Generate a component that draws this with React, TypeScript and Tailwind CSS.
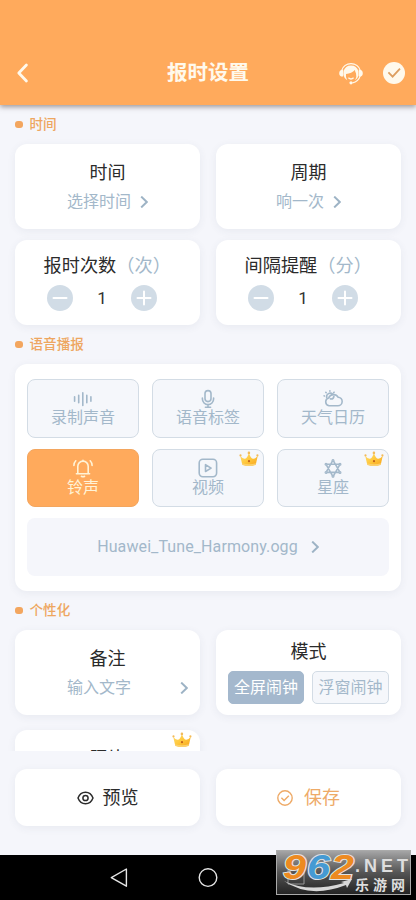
import React, { FC, ReactNode } from "react";
import clsx from "clsx";

interface ICard {
	className?: string;
	children?: ReactNode;
}

interface IStepper {
	title: string;
	unit: string;
	value: number;
}

const Card: FC<ICard> = ({ className, children }) => (
	<div
		className={clsx(
			"relative rounded-[12px] bg-white shadow-[0_2px_8px_rgba(60,70,100,0.07)]",
			className
		)}
	>
		{children}
	</div>
);

const SectionLabel: FC<{ label: string; className?: string }> = ({
	label,
	className,
}) => (
	<div className={clsx("flex items-center gap-[7px]", className)}>
		<span className="mt-px size-[7.5px] rounded-[3px] bg-[#f3a65f]" />
		<h2 className="text-[13.6px] leading-5 font-medium text-[#eea660]">{label}</h2>
	</div>
);

const Chevron: FC<{ className?: string }> = ({ className }) => (
	<svg
		viewBox="0 0 8 12"
		className={clsx("h-3 w-2 shrink-0 fill-none stroke-[#9db3c5] stroke-2", className)}
	>
		<path d="M1.2.6 6.8 6l-5.6 5.4" />
	</svg>
);

const Crown: FC<{ className?: string }> = ({ className }) => (
	<svg viewBox="0 0 20 16" className={clsx("absolute h-[16px] w-[20px]", className)}>
		<defs>
			<linearGradient id="gold" x1="0" x2="1" y1="0" y2="1">
				<stop offset="0" stopColor="#ffde72" />
				<stop offset="0.5" stopColor="#ffc83c" />
				<stop offset="1" stopColor="#f7a21b" />
			</linearGradient>
		</defs>
		<path
			d="M3.2 13.6 1.2 4.8q2.6 3.4 4.8 3Q8.4 7 9.9 2q1.6 5 4 5.8 2.2.4 4.9-3l-2 8.8Q10 16.4 3.2 13.6Z"
			fill="url(#gold)"
		/>
		<path d="M3 12.2q7 2.3 14 0l-.4 1.7q-6.6 2.4-13.2 0Z" fill="#fbd06c" />
		<circle cx="1.5" cy="4.4" r="1.1" fill="#f3bb5a" />
		<circle cx="9.9" cy="1.9" r="1.3" fill="#f3bb5a" />
		<circle cx="18.4" cy="4.4" r="1.1" fill="#f3bb5a" />
		<circle cx="10" cy="10.2" r="1.1" fill="#c2611b" />
	</svg>
);

const iconClass = "h-5 w-5 fill-none stroke-current stroke-[1.6]";

const tiles = [
	{
		label: "录制声音",
		icon: (
			<svg viewBox="0 0 20 20" className={iconClass}>
				<path
					d="M1.6 8.7v4.5M5.7 7.2v7.6M9.8 4.8v12.6M13.8 7.2v7.6M17.9 8.7v4.5"
					strokeLinecap="round"
				/>
			</svg>
		),
	},
	{
		label: "语音标签",
		icon: (
			<svg viewBox="0 0 20 20" className={iconClass} strokeLinecap="round">
				<rect x="7" y="2.6" width="6" height="11" rx="3" />
				<path d="M4.4 10v1a5.6 5.6 0 0 0 11.2 0v-1M10 16.8v2.2M7.4 19.2h5.2" />
			</svg>
		),
	},
	{
		label: "天气日历",
		icon: (
			<svg viewBox="0 0 20 20" className={iconClass} strokeLinecap="round">
				<path d="M6 17.8h8.6a4.3 4.3 0 0 0 .5-8.6 5.2 5.2 0 0 0-9.4.8A4 4 0 0 0 6 17.8Z" />
				<path d="M3.7 9.6a3.6 3.6 0 0 1 6-3.4M1.4 7.9l-.3-.1M3.2 4.7l-.4-.4M6.9 3.3v-.5M10.7 4.6l.4-.4" />
				<path d="M7.4 10.9q3.1.4 3.5-2.6" />
			</svg>
		),
	},
	{
		label: "铃声",
		active: true,
		icon: (
			<svg viewBox="0 0 20 20" className={iconClass} strokeLinecap="round" strokeLinejoin="round">
				<path d="M3.4 15.7h13.2M4.8 15.5V8.3a5.2 5.2 0 0 1 10.4 0v7.2M8.4 18.3q1.6 1 3.2 0M10 3V2.2" />
				<path d="M2.8 2.8Q1 4.6.9 7.5M17.2 2.8Q19 4.6 19.1 7.5" />
			</svg>
		),
	},
	{
		label: "视频",
		crown: true,
		icon: (
			<svg viewBox="0 0 20 20" className={iconClass} strokeLinejoin="round">
				<rect x="1.2" y="1.3" width="17.4" height="17.4" rx="3.6" />
				<path d="M7.5 6.7v6.8l5.6-3.4Z" />
			</svg>
		),
	},
	{
		label: "星座",
		crown: true,
		icon: (
			<svg viewBox="0 0 20 20" className={iconClass} strokeLinejoin="round">
				<path d="m10 2.2 7 12.2H3ZM10 18.6 3 6.3h14Z" />
				<g className="fill-[#f5f7fb] stroke-[1.2]">
					<circle cx="10" cy="2.6" r=".9" />
					<circle cx="10" cy="18.2" r=".9" />
					<circle cx="3" cy="6.3" r=".9" />
					<circle cx="17" cy="6.3" r=".9" />
					<circle cx="3" cy="14.4" r=".9" />
					<circle cx="17" cy="14.4" r=".9" />
				</g>
			</svg>
		),
	},
];

const RoundButton: FC<{ plus?: boolean }> = ({ plus }) => (
	<button className="grid size-[26px] place-items-center rounded-full bg-[#d1dce6]">
		<svg
			viewBox="0 0 16 16"
			className="size-4 fill-none stroke-white stroke-2"
			strokeLinecap="round"
		>
			<path d={plus ? "M1.5 8h13M8 1.5v13" : "M1.5 8h13"} />
		</svg>
	</button>
);

const StepperCard: FC<IStepper> = ({ title, unit, value }) => (
	<Card className="h-[85px] pt-[14px]">
		<h3 className="pl-[28.5px] text-[18.2px] leading-6 whitespace-nowrap text-[#2b2b2b]">
			{title}
			<span className="text-[#a3b8ca]">（{unit}）</span>
		</h3>
		<div className="mt-[7px] flex items-center justify-between pr-[43px] pl-[32px]">
			<RoundButton />
			<span className="text-[17px] leading-5 text-[#333]">{value}</span>
			<RoundButton plus />
		</div>
	</Card>
);

const SelectCard: FC<{ title: string; value: string }> = ({ title, value }) => (
	<Card className="flex h-[85px] flex-col items-center pt-[17px]">
		<h3 className="text-[18px] leading-6 text-[#2b2b2b]">{title}</h3>
		<div className="mt-[5px] flex items-center gap-[9px]">
			<span className="text-[16px] leading-6 text-[#a3b8ca]">{value}</span>
			<Chevron />
		</div>
	</Card>
);

const Header = () => (
	<header className="relative z-10 flex h-[105px] items-end bg-[#ffaa5c] px-[11px] pb-[20px] shadow-[0_2px_5px_rgba(70,60,60,0.5)]">
		<div className="flex flex-1 items-center">
			<svg
				viewBox="0 0 24 24"
				className="size-6 fill-none stroke-[#fff9ec] stroke-[2.8]"
				strokeLinecap="round"
				strokeLinejoin="round"
			>
				<path d="m15.4 4-7.6 8 7.6 8" />
			</svg>
		</div>
		<h1 className="text-[20.5px] leading-[23px] font-bold text-[#fff9ec]">
			报时设置
		</h1>
		<div className="flex flex-1 items-center justify-end gap-[20px]">
			<svg viewBox="0 0 24 24" className="size-6 fill-none stroke-[#fff9ec]">
				<path
					d="M2.6 9.6a9.8 9.8 0 0 1 18.8 0M21.2 14.8q-1.6 5.6-7.8 7"
					strokeWidth="1.2"
				/>
				<path
					d="M4.6 10a7.7 7.7 0 0 1 14.8 0l.1 4.6q-.8 3.2-3.4 4.6 2-3.6.9-7-.9-1-1.1-3.1-3.2 3.4-8.9 3.8-.6 3.5 1.2 6.3-3.2-1.8-3.8-5.4Z"
					stroke="none"
					fill="#fff9ec"
				/>
				<path
					d="M4.2 8.6v7Q.2 15.9.2 12.2q0-3.2 4-3.6ZM19.8 8.6v7q4 .3 4-3.4 0-3.2-4-3.6Z"
					fill="#fff9ec"
					stroke="none"
				/>
				<path d="M9.4 16.8q2.6 2.4 5.2 0" strokeWidth="1.3" />
				<circle cx="12" cy="21.8" r="1.6" fill="#fff9ec" stroke="none" />
			</svg>
			<svg viewBox="0 0 22 22" className="size-[22px]">
				<circle cx="11" cy="11" r="11" fill="#fff9ec" />
				<path
					d="m5.4 10.4 4.2 4.2 7.4-8"
					fill="none"
					stroke="#dd9e60"
					strokeWidth="1.8"
				/>
			</svg>
		</div>
	</header>
);

const Watermark = () => (
	<div className="absolute top-[-5px] left-[276px] h-[45px] w-[135px] border border-[#aaa] bg-linear-to-b from-[#a5a5a6] via-[#555] to-[#242424]">
		<svg
			viewBox="0 0 135 45"
			className="absolute -top-px -left-px h-[45px] w-[135px] overflow-visible"
		>
			<path d="M12 20h16v14H12Z" fill="none" stroke="#999" strokeWidth="1" />
			<path
				d="M8 31q24 12 60 2l-3-1 11-3-5 9-1-3q-36 14-62-4Z"
				fill="#d8d8d8"
			/>
			<g
				fontFamily="Liberation Sans"
				fontWeight="bold"
				fontStyle="italic"
				fontSize="35"
				stroke="#e2e2e2"
				strokeWidth="2"
				paintOrder="stroke"
			>
				<text x="7" y="29" textLength="23" lengthAdjust="spacingAndGlyphs" fill="#ed8a21">
					9
				</text>
				<text x="31" y="29" textLength="23" lengthAdjust="spacingAndGlyphs" fill="#459ad3">
					6
				</text>
				<text x="55" y="29" textLength="23" lengthAdjust="spacingAndGlyphs" fill="#ed8a21">
					2
				</text>
			</g>
			<g fill="#dedede" fontWeight="bold">
				<text x="79" y="22" fontFamily="Liberation Sans" fontSize="18" textLength="53">
					.NET
				</text>
				<text x="79" y="40" fontFamily="Noto Sans CJK SC" fontSize="14" textLength="50">
					乐游网
				</text>
			</g>
		</svg>
	</div>
);

const NavBar = () => (
	<nav className="relative h-[45px] bg-black">
		<svg
			viewBox="0 0 416 45"
			className="h-[45px] w-full fill-none stroke-[#e6e6e6] stroke-[1.4]"
		>
			<path d="M126.4 14v17.2L111.3 22.6Z" strokeLinejoin="round" />
			<circle cx="208" cy="22.6" r="8.8" />
		</svg>
		<Watermark />
	</nav>
);

const App = () => {
	return (
		<div className="flex h-[900px] w-[416px] flex-col overflow-hidden bg-[#f5f6fb] font-['Roboto','Noto_Sans_CJK_SC',sans-serif]">
			<Header />
			<main className="h-[646px] shrink-0 overflow-hidden px-[15px] pt-[9px]">
				<SectionLabel label="时间" />
				<div className="mt-[10px] grid grid-cols-2 gap-x-4 gap-y-[11px]">
					<SelectCard title="时间" value="选择时间" />
					<SelectCard title="周期" value="响一次" />
					<StepperCard title="报时次数" unit="次" value={1} />
					<StepperCard title="间隔提醒" unit="分" value={1} />
				</div>

				<SectionLabel label="语音播报" className="mt-[9px]" />
				<Card className="mt-[10px] h-[227px] px-3 pt-[15px]">
					<div className="grid grid-cols-3 gap-x-[13px] gap-y-[11px]">
						{tiles.map((item) => (
							<button
								key={item.label}
								className={clsx(
									"relative flex h-[58.5px] flex-col items-center rounded-[8px] border pt-[8px]",
									item.active
										? "border-[#f3a65f] bg-[#ffaa5c] text-[#fff3d6]"
										: "border-[#d3dce5] bg-[#f5f7fb] text-[#a3b8ca]"
								)}
							>
								{item.icon}
								<span className="mt-px text-[16px] leading-[18px]">
									{item.label}
								</span>
								{item.crown && <Crown className="top-[1px] right-[4px]" />}
							</button>
						))}
					</div>
					<div className="mt-[11px] flex h-[58px] items-center justify-center gap-[13px] rounded-[8px] bg-[#f5f6fb]">
						<span className="text-[16px] tracking-[0.1px] text-[#a3b8ca]">
							Huawei_Tune_Harmony.ogg
						</span>
						<Chevron />
					</div>
				</Card>

				<SectionLabel label="个性化" className="mt-[9px]" />
				<div className="mt-[10px] grid grid-cols-2 gap-x-4 gap-y-[15px]">
					<Card className="h-[85px] pt-[17px] text-center">
						<h3 className="text-[18px] leading-6 text-[#2b2b2b]">备注</h3>
						<div className="mt-[5px] flex items-center pr-[12px] pl-[52px]">
							<span className="text-[16px] leading-6 text-[#a3b8ca]">输入文字</span>
							<Chevron className="ml-auto" />
						</div>
					</Card>
					<Card className="h-[85px] pt-[10px] text-center">
						<h3 className="text-[18px] leading-6 text-[#2b2b2b]">模式</h3>
						<div className="mt-[7px] flex justify-between px-3 text-[16px] leading-[32px]">
							<button className="h-[33px] w-[76px] rounded-[5px] border border-[#a4b8cd] bg-[#a4b8cd] whitespace-nowrap text-white">
								全屏闹钟
							</button>
							<button className="h-[33px] w-[77px] rounded-[5px] border border-[#d3dce5] bg-[#f5f7fb] whitespace-nowrap text-[#a3b8ca]">
								浮窗闹钟
							</button>
						</div>
					</Card>
					<Card className="h-[85px] pt-[17px] text-center">
						<h3 className="text-[18px] leading-6 text-[#2b2b2b]">照片</h3>
						<Crown className="top-[2px] right-[8px]" />
					</Card>
				</div>
			</main>

			<footer className="grid h-[104px] shrink-0 grid-cols-2 gap-4 px-[15px] pt-[18px]">
				<Card className="flex h-[57px] items-center justify-center gap-[9px] text-[#2b2b2b]">
					<svg viewBox="0 0 17 14" className="h-[14px] w-[17px] fill-none stroke-current stroke-[1.5]">
						<path d="M1 7q2.2-5.7 7.5-5.7T16 7q-2.2 5.7-7.5 5.7T1 7Z" strokeLinejoin="round" />
						<circle cx="8.5" cy="7" r="2.6" />
					</svg>
					<span className="text-[18px] leading-6">预览</span>
				</Card>
				<Card className="flex h-[57px] items-center justify-center gap-[11px] text-[#eeaa67]">
					<svg viewBox="0 0 16 16" className="size-4 fill-none stroke-current stroke-[1.4]">
						<circle cx="8" cy="8" r="7.2" />
						<path d="m4.4 7.8 2.7 2.8 4.7-4.8" />
					</svg>
					<span className="text-[18px] leading-6">保存</span>
				</Card>
			</footer>
			<NavBar />
		</div>
	);
};

export default App;
